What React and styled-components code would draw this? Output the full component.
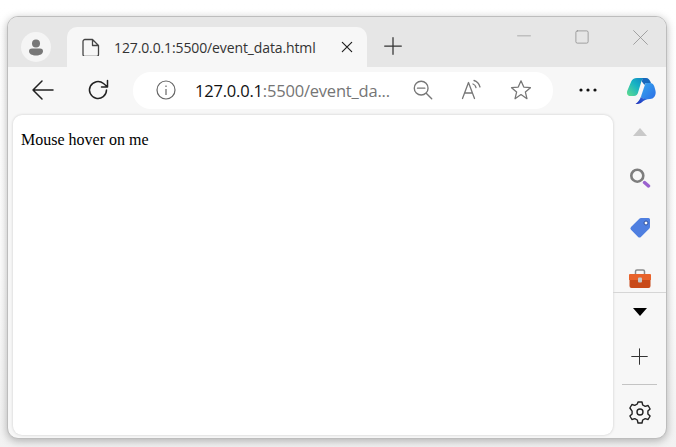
import styled, { createGlobalStyle } from 'styled-components';

const GlobalStyle = createGlobalStyle`
  html, body {
    margin: 0;
    padding: 0;
    height: 100%;
    background: #fff;
    overflow: hidden;
  }
`;

const Page = styled.div`
  width: 676px;
  height: 447px;
  padding: 16px 9px 8px 7px;
  box-sizing: border-box;
  background: linear-gradient(#ffffff, #fdfdfd 60%, #f2f2f2);
`;

const Win = styled.div`
  width: 660px;
  height: 423px;
  box-sizing: border-box;
  border: 1px solid #bdbdbd;
  border-radius: 11px;
  overflow: hidden;
  display: flex;
  flex-direction: column;
  background: #f7f7f7;
  box-shadow: 0 2px 9px rgba(0, 0, 0, 0.28);
`;

const TabBar = styled.div`
  height: 50px;
  flex: none;
  background: #e6e6e6;
  display: flex;
  align-items: flex-end;
  padding-left: 13px;
`;

const Avatar = styled.div`
  width: 30px;
  height: 30px;
  border-radius: 50%;
  background: #f5f5f5;
  margin-bottom: 5px;
  display: flex;
  align-items: center;
  justify-content: center;
`;

const Tab = styled.div`
  width: 300px;
  height: 40px;
  margin-left: 16px;
  background: #f7f7f7;
  border-radius: 10px 10px 0 0;
  display: flex;
  align-items: center;
  padding: 0 12px 0 15px;
  box-sizing: border-box;
`;

const TabTitle = styled.span`
  font: 14px "Open Sans", sans-serif;
  color: #333;
  margin-left: 14px;
  flex: 1;
  white-space: nowrap;
  letter-spacing: -0.12px;
`;

const NewTab = styled.div`
  margin: 0 0 11px 16px;
  width: 20px;
  height: 20px;
  display: flex;
`;

const WinControls = styled.div`
  margin-left: auto;
  align-self: flex-start;
  display: flex;
  height: 40px;
  align-items: center;
  padding-right: 18px;
  gap: 44px;
`;

const ToolBar = styled.div`
  height: 48px;
  flex: none;
  display: flex;
  align-items: center;
  box-sizing: border-box;
  padding: 0 0 2px 0;
`;

const NavBtn = styled.div`
  width: ${(p) => p.$size || 24}px;
  height: 24px;
  margin-left: ${(p) => p.$left}px;
  flex: none;
  display: flex;
  align-items: center;
  svg {
    flex: none;
  }
`;

const Address = styled.div`
  width: 420px;
  height: 37px;
  margin-left: 23px;
  flex: none;
  background: #fff;
  border-radius: 18px;
  display: flex;
  align-items: center;
  padding-left: 22px;
  box-sizing: border-box;
`;

const Url = styled.span`
  font: 16.5px "Open Sans", sans-serif;
  color: #757575;
  margin-left: 18px;
  width: 209px;
  letter-spacing: -0.2px;
  white-space: nowrap;
  b {
    font-weight: 400;
    color: #111;
  }
`;

const AddrIcon = styled.div`
  width: 22px;
  height: 22px;
  flex: none;
  margin-left: ${(p) => p.$left || 0}px;
  display: flex;
`;

const Body = styled.div`
  flex: 1;
  display: flex;
  min-height: 0;
  padding-left: 5px;
`;

const Content = styled.div`
  width: 600px;
  height: 320px;
  flex: none;
  background: #fff;
  border-radius: 9px;
  box-shadow: 0 0 3px rgba(0, 0, 0, 0.18);
  padding: 16px 8px;
  box-sizing: border-box;
  font: 16px/18px "Liberation Serif", serif;
  color: #000;
`;

const Side = styled.div`
  flex: 1;
  display: flex;
  flex-direction: column;
  align-items: center;
`;

const SideTop = styled.div`
  height: 178px;
  width: 100%;
  flex: none;
  box-sizing: border-box;
  border-bottom: 1px solid #d6d6d6;
  overflow: hidden;
  display: flex;
  flex-direction: column;
  align-items: center;
`;

const SideSlot = styled.div`
  flex: none;
  display: flex;
  margin-top: ${(p) => p.$top}px;
`;

const SideRule = styled.div`
  width: 35px;
  height: 1px;
  background: #c4c4c4;
  flex: none;
  margin-top: 19px;
`;

const Line = ({ d, w = 24, box = 24, color = '#222', sw = 1.5 }) => (
  <svg width={w} height={w} viewBox={`0 0 ${box} ${box}`} fill="none" stroke={color} strokeWidth={sw} strokeLinecap="round" strokeLinejoin="round">
    <path d={d} />
  </svg>
);

const Copilot = () => (
  <svg width="30" height="28" viewBox="0 -1 30 28">
    <defs>
      <linearGradient id="cpLeft" x1="0" y1="1" x2="1" y2="0">
        <stop offset="0" stopColor="#62dd8c" />
        <stop offset="0.55" stopColor="#17b3c4" />
        <stop offset="1" stopColor="#1180c4" />
      </linearGradient>
      <linearGradient id="cpRight" x1="0" y1="0" x2="1" y2="1">
        <stop offset="0" stopColor="#35a6ee" />
        <stop offset="1" stopColor="#2c6fe6" />
      </linearGradient>
      <linearGradient id="cpTail" x1="1" y1="0" x2="0" y2="1">
        <stop offset="0" stopColor="#2c7ae6" />
        <stop offset="1" stopColor="#1f2fb8" />
      </linearGradient>
    </defs>
    <path d="M11 1H19C17 1 16 3 15.2 5L12.2 15C11.700 17.500 10 19 8 19H4C1.500 19 .5 16.500 1.200 14L5 5C6 2.500 8 1 11 1Z" fill="url(#cpLeft)" />
    <path d="M17 1H20C22.500 1 24 3 25 6H20.500C19.500 6 19 7 18.500 8L15.800 4.500C16.200 2.800 17 1 17 1Z" fill="#1668bc" />
    <path d="M20.500 6H24C26.500 6 27.500 7.500 28.300 9.500L29.300 13C30.500 17.500 28.500 22 24 22H20C17.500 22 16 21.500 15 19.500L18.500 9C19 7.500 19.500 6 20.500 6Z" fill="url(#cpRight)" />
    <path d="M15 19.500C16 21.500 18 22 24 22C20 22 18 23.500 15.500 25.500C14 27 12 27 9.500 27C12 25.500 14 22.500 15 19.500Z" fill="url(#cpTail)" />
  </svg>
);

function App() {
  return (
    <Page>
      <GlobalStyle />
      <Win>
        <TabBar>
          <Avatar>
            <svg width="20" height="20" viewBox="0 0 20 20" fill="#777">
              <circle cx="10" cy="6.5" r="4" />
              <path d="M3 14c0-1.700 1.300-2.500 3-2.500h8c1.700 0 3 .8 3 2.500 0 3-3 4.500-7 4.500s-7-1.500-7-4.500z" />
            </svg>
          </Avatar>
          <Tab>
            <Line w={18} box={18} sw={1.3} color="#444" d="M3 1.500h7.500L16.500 7.500v9a2 2 0 0 1-2 2H3a2 2 0 0 1-2-2v-13a2 2 0 0 1 2-2zM10.500 1.500v6h6" />
            <TabTitle>127.0.0.1:5500/event_data.html</TabTitle>
            <Line w={16} sw={1.8} color="#222" d="M5 5l14 14M19 5L5 19" />
          </Tab>
          <NewTab>
            <Line w={20} sw={1.5} color="#333" d="M12 2v20M2 12h20" />
          </NewTab>
          <WinControls>
            <Line w={14} sw={1.1} color="#8a8a8a" d="M1 10h22" />
            <Line w={14} sw={1.3} color="#8a8a8a" d="M4 1.500h16a2.500 2.500 0 0 1 2.500 2.500v16a2.500 2.500 0 0 1-2.500 2.500H4A2.500 2.500 0 0 1 1.500 20V4A2.500 2.500 0 0 1 4 1.500z" />
            <Line w={15} sw={1.2} color="#8a8a8a" d="M1 1l22 22M23 1L1 23" />
          </WinControls>
        </TabBar>
        <ToolBar>
          <NavBtn $left={23}>
            <Line d="M22 12H2M11 3l-9 9 9 9" sw={1.5} color="#222" />
          </NavBtn>
          <NavBtn $left={31}>
            <Line d="M20.500 12a8.500 8.500 0 1 1-3-6.500L21 8.500M21.500 2.500v6.500h-6" sw={1.5} color="#222" />
          </NavBtn>
          <Address>
            <AddrIcon>
              <svg width="22" height="22" viewBox="0 0 22 22" fill="none" stroke="#666" strokeWidth="1.2">
                <circle cx="11" cy="11" r="9" />
                <path d="M11 10v6M11 6.500v1.500" />
              </svg>
            </AddrIcon>
            <Url><b>127.0.0.1</b>:5500/event_da...</Url>
            <AddrIcon $left={8}>
              <Line w={22} sw={1.5} color="#777" d="M10 2.500a7.500 7.500 0 1 0 0 15 7.500 7.500 0 0 0 0-15zM6 10h8M15.500 15.500l6 6" />
            </AddrIcon>
            <AddrIcon $left={27}>
              <Line w={22} box={22} sw={1.3} color="#777" d="M1.500 19.500L7.500 3.500l6 16M3.500 14h8M12 5c1.500 .5 2.500 1.500 3 3.500M13 1.500c3 .8 5 3 6 6.500" />
            </AddrIcon>
            <AddrIcon $left={27}>
              <Line w={22} sw={1.4} color="#777" d="M12 2l3 6.800 7.300 .7-5.500 4.800 1.700 7.200L12 17l-6.500 4.500 1.700-7.200L1.700 9.500 9 8.800z" />
            </AddrIcon>
          </Address>
          <NavBtn $left={23}>
            <svg width="24" height="24" viewBox="0 0 24 24" fill="#111">
              <circle cx="5" cy="12" r="1.600" />
              <circle cx="12" cy="12" r="1.600" />
              <circle cx="19" cy="12" r="1.600" />
            </svg>
          </NavBtn>
          <NavBtn $left={26} $size={30}>
            <Copilot />
          </NavBtn>
        </ToolBar>
        <Body>
          <Content>Mouse hover on me</Content>
          <Side>
            <SideTop>
              <SideSlot $top={13}>
                <svg width="14" height="8" viewBox="0 0 14 8"><path d="M7 0l7 8H0z" fill="#c9c9c9" /></svg>
              </SideSlot>
              <SideSlot $top={30}>
                <svg width="22" height="22" viewBox="0 0 22 22" fill="none">
                  <circle cx="8.300" cy="9.700" r="6" stroke="#7d7d7d" strokeWidth="2.600" />
                  <path d="M15.500 16.500l4 3.500" stroke="#9a62cf" strokeWidth="3.400" strokeLinecap="round" />
                </svg>
              </SideSlot>
              <SideSlot $top={29}>
                <svg width="22" height="22" viewBox="0 0 22 22">
                  <path d="M12 1h7.500a1.500 1.500 0 0 1 1.500 1.500V10a2 2 0 0 1-.6 1.400l-8.500 8.500a2 2 0 0 1-2.800 0L2 12.700a2 2 0 0 1 0-2.800l8.600-8.400A2 2 0 0 1 12 1z" fill="#4f7fe0" />
                  <circle cx="17" cy="6" r="2" fill="#fff" stroke="#2c4f9e" strokeWidth="1" />
                </svg>
              </SideSlot>
              <SideSlot $top={30}>
                <svg width="24" height="20" viewBox="0 0 24 20">
                  <path d="M7.500 6V2.500A1.500 1.500 0 0 1 9 1h6a1.500 1.500 0 0 1 1.500 1.500V6" fill="none" stroke="#8a8a8a" strokeWidth="1.500" />
                  <path d="M2 5h20a1 1 0 0 1 1 1v5H1V6a1 1 0 0 1 1-1z" fill="#e8622a" />
                  <path d="M1.500 11h21v6a2 2 0 0 1-2 2h-17a2 2 0 0 1-2-2z" fill="#c84a1a" />
                  <rect x="10" y="8.500" width="4" height="5" rx="1" fill="#c8c8c8" />
                </svg>
              </SideSlot>
            </SideTop>
            <SideSlot $top={15}>
              <svg width="14" height="8" viewBox="0 0 14 8"><path d="M0 0h14L7 8z" fill="#000" /></svg>
            </SideSlot>
            <SideSlot $top={32}>
              <Line w={17} sw={1.5} color="#333" d="M12 1v22M1 12h22" />
            </SideSlot>
            <SideRule />
            <SideSlot $top={15}>
              <svg width="24" height="24" viewBox="0 0 24 24" fill="none" stroke="#222" strokeWidth="1.400" strokeLinejoin="round">
                <circle cx="12" cy="12" r="3" />
                <path d="M10 2h4l.7 3 2.500 1.400 2.900-.9 2 3.500-2.200 2.100v2.800L22.100 16l-2 3.500-2.900-.9-2.500 1.400-.7 3h-4l-.7-3-2.500-1.400-2.900.9-2-3.500 2.200-2.100v-2.800L1.900 8l2-3.500 2.900.9 2.500-1.400z" />
              </svg>
            </SideSlot>
          </Side>
        </Body>
      </Win>
    </Page>
  );
}

export default App;
